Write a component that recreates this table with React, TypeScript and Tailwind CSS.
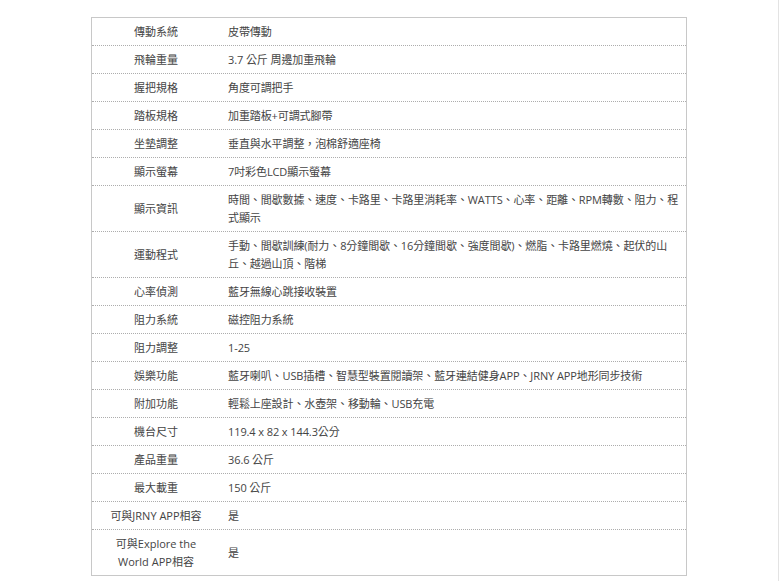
import React from 'react';

interface SpecRow {
  label: React.ReactNode;
  value: React.ReactNode;
}

const specs: SpecRow[] = [
  { label: '傳動系統', value: '皮帶傳動' },
  { label: '飛輪重量', value: '3.7 公斤 周邊加重飛輪' },
  { label: '握把規格', value: '角度可調把手' },
  { label: '踏板規格', value: '加重踏板+可調式腳帶' },
  { label: '坐墊調整', value: '垂直與水平調整，泡棉舒適座椅' },
  { label: '顯示螢幕', value: '7吋彩色LCD顯示螢幕' },
  {
    label: '顯示資訊',
    value: '時間、間歇數據、速度、卡路里、卡路里消耗率、WATTS、心率、距離、RPM轉數、阻力、程式顯示'
  },
  {
    label: '運動程式',
    value: '手動、間歇訓練(耐力、8分鐘間歇、16分鐘間歇、強度間歇)、燃脂、卡路里燃燒、起伏的山丘、越過山頂、階梯'
  },
  { label: '心率偵測', value: '藍牙無線心跳接收裝置' },
  { label: '阻力系統', value: '磁控阻力系統' },
  { label: '阻力調整', value: '1-25' },
  { label: '娛樂功能', value: '藍牙喇叭、USB插槽、智慧型裝置閱讀架、藍牙連結健身APP、JRNY APP地形同步技術' },
  { label: '附加功能', value: '輕鬆上座設計、水壺架、移動輪、USB充電' },
  { label: '機台尺寸', value: '119.4 x 82 x 144.3公分' },
  { label: '產品重量', value: '36.6 公斤' },
  { label: '最大載重', value: '150 公斤' },
  { label: '可與JRNY APP相容', value: '是' },
  {
    label: (
      <>
        可與Explore the
        <br />
        World APP相容
      </>
    ),
    value: '是'
  }
];

const App: React.FC = () => {
  return (
    <div
      className="w-full h-[581px] bg-white border-r border-[#e3e3e3] pl-[91px] pt-[17px] text-[#444] text-[11px] leading-[18px]"
      style={{ fontFamily: '"Open Sans", "Noto Sans CJK TC", sans-serif' }}
    >
      <div className="w-[596px] border border-[#c8c8c8]">
        {specs.map((row, index) => (
          <div
            key={index}
            className={`flex ${index < specs.length - 1 ? 'border-b border-dotted border-[#adadad]' : ''}`}
          >
            <div className="w-[128px] shrink-0 flex items-center justify-center text-center px-1 pt-[5px] pb-[4px]">
              {row.label}
            </div>
            {/* value column: tight right padding so long lines break where the source does */}
            <div className="flex-1 flex items-center pl-2 pr-[1px] pt-[5px] pb-[4px]">
              <span className="tracking-[-0.1px]">{row.value}</span>
            </div>
          </div>
        ))}
      </div>
    </div>
  );
};

export default App;
